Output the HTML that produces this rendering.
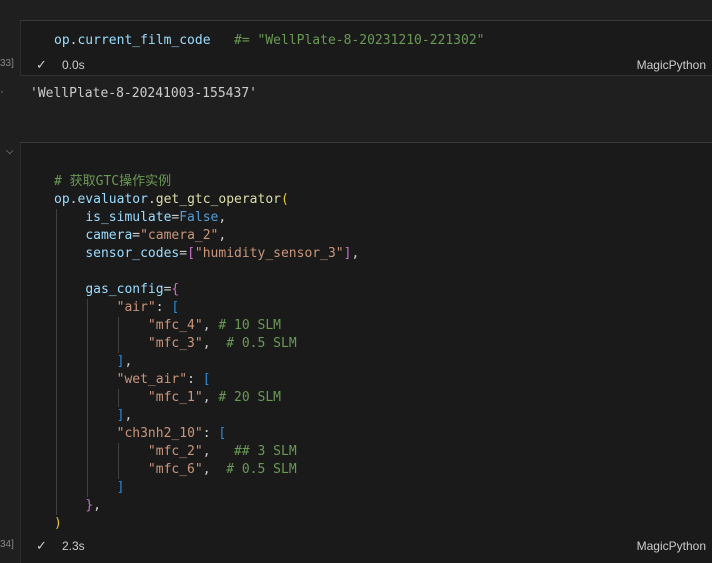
<!DOCTYPE html><html><head><style>
body{margin:0;width:712px;height:550px;background:#1f1f1f;overflow:hidden;position:relative;font-family:"DejaVu Sans Mono","Liberation Mono",monospace;font-size:13px;color:#cccccc}
.cell{position:absolute;left:20px;right:0;background:#1a1a1a;border-top:1px solid #3a3a3a;border-left:1px solid #2e2e2e}
.l{position:absolute;white-space:pre;line-height:18px}
.v{color:#9cdcfe}.s{color:#c9967c}.c{color:#6a9955}.k{color:#569cd6}.f{color:#dcdcaa}.y{color:#e8c93a}.p{color:#c872c8}.b{color:#2a8ad8}.w{color:#d4d4d4}
.ui{font-family:"Liberation Sans","DejaVu Sans",sans-serif;font-size:12px;color:#cccccc;position:absolute}
.g{position:absolute;width:1px;background:#404040}
</style></head><body>
<div class="cell" style="top:20px;height:54px;border-bottom:1px solid #333"></div>
<div class="l" style="left:54px;top:32px"><span class="v">op</span>.<span class="v">current_film_code</span>   <span class="c">#= "WellPlate-8-20231210-221302"</span></div>
<div class="ui" style="left:36px;top:57px;font-size:13px">✓</div>
<div class="ui" style="left:62px;top:58px">0.0s</div>
<div class="ui" style="right:6px;top:58px">MagicPython</div>
<div class="ui" style="left:0;top:58px;font-size:10px;color:#888">33]</div>
<div class="l" style="left:30px;top:85px;color:#cccccc">'WellPlate-8-20241003-155437'</div>
<div class="ui" style="left:0;top:84px;color:#888">·</div>
<div class="cell" style="top:142px;height:420px"></div>
<div class="ui" style="left:6px;top:146px;color:#aaa;font-size:10px">⌵</div>
<div class="g" style="left:56px;top:209px;height:306px"></div>
<div class="g" style="left:87px;top:299px;height:198px"></div>
<div class="g" style="left:118px;top:317px;height:36px"></div>
<div class="g" style="left:118px;top:389px;height:18px"></div>
<div class="g" style="left:118px;top:443px;height:36px"></div>
<div class="l" style="left:54px;top:173px"><span class="c"># 获取GTC操作实例</span>
<span class="v">op</span>.<span class="v">evaluator</span>.<span class="f">get_gtc_operator</span><span class="y">(</span>
    <span class="v">is_simulate</span>=<span class="k">False</span>,
    <span class="v">camera</span>=<span class="s">"camera_2"</span>,
    <span class="v">sensor_codes</span>=<span class="p">[</span><span class="s">"humidity_sensor_3"</span><span class="p">]</span>,

    <span class="v">gas_config</span>=<span class="p">{</span>
        <span class="s">"air"</span>: <span class="b">[</span>
            <span class="s">"mfc_4"</span>, <span class="c"># 10 SLM</span>
            <span class="s">"mfc_3"</span>,  <span class="c"># 0.5 SLM</span>
        <span class="b">]</span>,
        <span class="s">"wet_air"</span>: <span class="b">[</span>
            <span class="s">"mfc_1"</span>, <span class="c"># 20 SLM</span>
        <span class="b">]</span>,
        <span class="s">"ch3nh2_10"</span>: <span class="b">[</span>
            <span class="s">"mfc_2"</span>,   <span class="c">## 3 SLM</span>
            <span class="s">"mfc_6"</span>,  <span class="c"># 0.5 SLM</span>
        <span class="b">]</span>
    <span class="p">}</span>,
<span class="y">)</span></div>
<div class="ui" style="left:36px;top:538px;font-size:13px">✓</div>
<div class="ui" style="left:62px;top:539px">2.3s</div>
<div class="ui" style="right:6px;top:539px">MagicPython</div>
<div class="ui" style="left:0;top:539px;font-size:10px;color:#888">34]</div>
</body></html>
